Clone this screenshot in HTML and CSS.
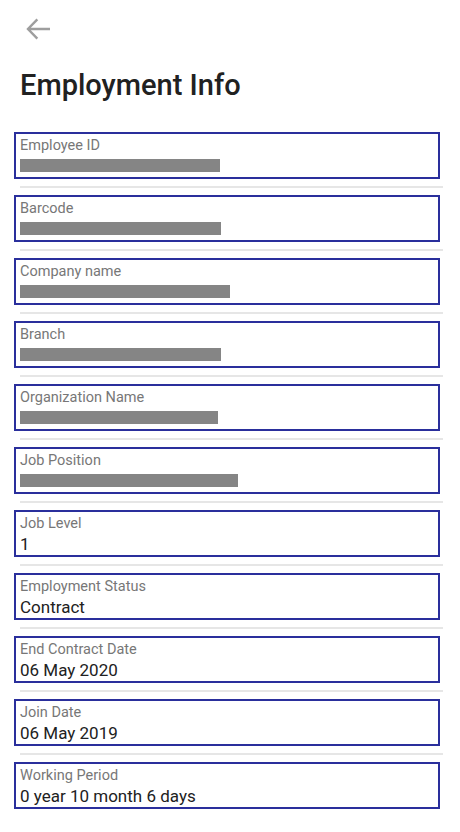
FILE: index.html
```html
<!DOCTYPE html>
<html lang="en">
  <head>
    <meta name="viewport" content="width=device-width, initial-scale=1">
    <link rel="stylesheet" href="styles.css">
    <title>Employment Info</title>
  </head>

  <body>
    <div class="topBar">
      <svg class="backIcon" width="32" height="32" viewBox="0 0 24 24">
        <path d="M21 12H4.5M11.5 4.8L4.5 12L11.5 19.2" fill="none" stroke="#9e9e9e" stroke-width="1.8"/>
      </svg>
    </div>

    <h1 class="pageTitle">Employment Info</h1>

    <div class="infoList">
      <div class="infoRow">
        <div class="infoBox">
          <div class="infoLabel">Employee ID</div>
          <div class="infoValue"><span class="hidden" style="width: 200px"></span></div>
        </div>
      </div>
      <div class="infoRow">
        <div class="infoBox">
          <div class="infoLabel">Barcode</div>
          <div class="infoValue"><span class="hidden" style="width: 201px"></span></div>
        </div>
      </div>
      <div class="infoRow">
        <div class="infoBox">
          <div class="infoLabel">Company name</div>
          <div class="infoValue"><span class="hidden" style="width: 210px"></span></div>
        </div>
      </div>
      <div class="infoRow">
        <div class="infoBox">
          <div class="infoLabel">Branch</div>
          <div class="infoValue"><span class="hidden" style="width: 201px"></span></div>
        </div>
      </div>
      <div class="infoRow">
        <div class="infoBox">
          <div class="infoLabel">Organization Name</div>
          <div class="infoValue"><span class="hidden" style="width: 198px"></span></div>
        </div>
      </div>
      <div class="infoRow">
        <div class="infoBox">
          <div class="infoLabel">Job Position</div>
          <div class="infoValue"><span class="hidden" style="width: 218px"></span></div>
        </div>
      </div>
      <div class="infoRow">
        <div class="infoBox">
          <div class="infoLabel">Job Level</div>
          <div class="infoValue">1</div>
        </div>
      </div>
      <div class="infoRow">
        <div class="infoBox">
          <div class="infoLabel">Employment Status</div>
          <div class="infoValue">Contract</div>
        </div>
      </div>
      <div class="infoRow">
        <div class="infoBox">
          <div class="infoLabel">End Contract Date</div>
          <div class="infoValue">06 May 2020</div>
        </div>
      </div>
      <div class="infoRow">
        <div class="infoBox">
          <div class="infoLabel">Join Date</div>
          <div class="infoValue">06 May 2019</div>
        </div>
      </div>
      <div class="infoRow lastRow">
        <div class="infoBox">
          <div class="infoLabel">Working Period</div>
          <div class="infoValue">0 year 10 month 6 days</div>
        </div>
      </div>
    </div>
  </body>
</html>
```

FILE: styles.css
```css
body {
  margin: 0;
  font-family: Roboto, "Noto Sans", sans-serif;
  background-color: #ffffff;
  color: #212121;
}

.topBar {
  height: 58px;
  padding-left: 22px;
  padding-top: 13px;
  box-sizing: border-box;
}

.backIcon {
  display: block;
}

.pageTitle {
  margin: 0;
  padding-left: 20px;
  font-size: 29px;
  font-weight: 500;
  line-height: 32px;
  height: 74px;
  box-sizing: border-box;
  padding-top: 11px;
  color: #212121;
}

.infoList {
  padding: 0 17px 0 14px;
}

.infoRow {
  padding-bottom: 7px;
  margin-bottom: 7px;
  border-bottom: 2px solid #e6e6e6;
  margin-left: 6px;
}

.lastRow {
  border-bottom: none;
}

.infoBox {
  margin-left: -6px;
  margin-right: 3px;
  height: 47px;
  box-sizing: border-box;
  border: 2px solid #2a2f9c;
  padding: 3px 4px 0 4px;
}

.infoLabel {
  font-size: 14.5px;
  line-height: 17px;
  color: #777777;
}

.infoValue {
  font-size: 17px;
  line-height: 22px;
  margin-top: 1px;
  color: #212121;
  height: 22px;
}

.hidden {
  display: inline-block;
  height: 13px;
  margin-top: 4px;
  vertical-align: top;
  background-color: #858585;
}
```
